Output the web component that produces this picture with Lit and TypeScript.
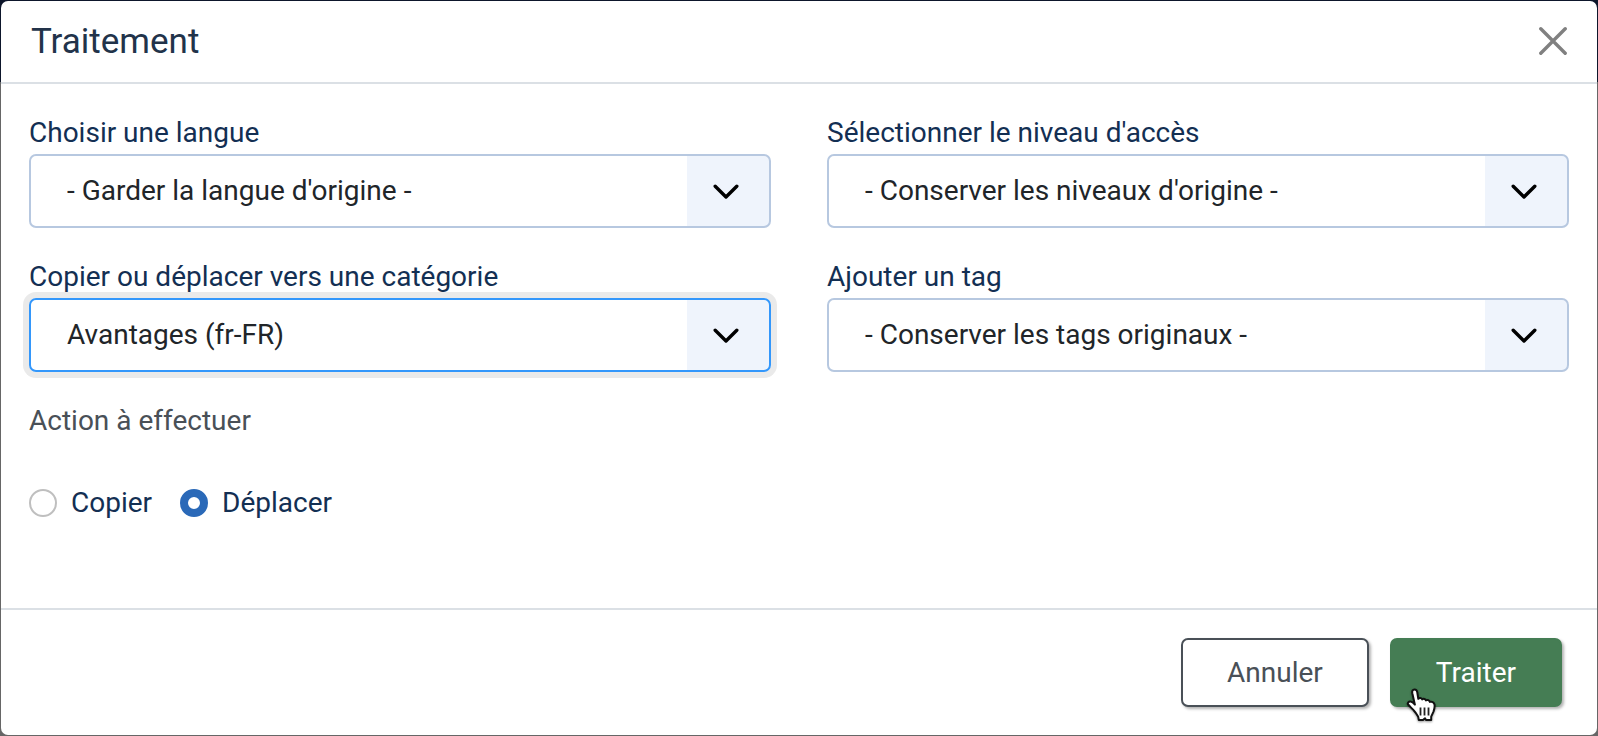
import { LitElement, html, css, svg } from "lit";
import { customElement, property, state } from "lit/decorators.js";
import { classMap } from "lit/directives/class-map.js";

interface Field {
  id: string;
  label: string;
  value: string;
}

const FIELDS: Field[] = [
  { id: "language", label: "Choisir une langue", value: "- Garder la langue d'origine -" },
  { id: "access", label: "Sélectionner le niveau d'accès", value: "- Conserver les niveaux d'origine -" },
  { id: "category", label: "Copier ou déplacer vers une catégorie", value: "Avantages (fr-FR)" },
  { id: "tag", label: "Ajouter un tag", value: "- Conserver les tags originaux -" },
];

@customElement("select-field")
class SelectField extends LitElement {
  @property() name = "";
  @property() label = "";
  @property() value = "";
  @property({ type: Boolean }) active = false;

  static styles = css`
    :host {
      display: block;
    }
    .label {
      display: block;
      line-height: 42px;
      color: #132f53;
    }
    .control {
      display: grid;
      grid-template-columns: 1fr 84px;
      border-radius: 7px;
    }
    .active {
      box-shadow: 0 0 0 6px #eaeaea;
    }
    .select {
      grid-area: 1 / 1 / 2 / 3;
      appearance: none;
      box-sizing: border-box;
      width: 100%;
      height: 74px;
      margin: 0;
      padding: 0 98px 2px 36px;
      border: 2px solid #b7c8e0;
      border-radius: 7px;
      outline: none;
      background: linear-gradient(#eff4fc, #eff4fc) right / 82px 100% no-repeat #fff;
      color: #212529;
      font: inherit;
    }
    .active .select {
      border-color: #3397fb;
    }
    .arrow {
      grid-area: 1 / 2;
      align-self: center;
      justify-self: center;
      z-index: 1;
      pointer-events: none;
      margin-right: 6px;
      margin-top: 2px;
    }
  `;

  render() {
    return html`
      <label class="label" for=${this.name}>${this.label}</label>
      <div class=${classMap({ control: true, active: this.active })}>
        <select class="select" id=${this.name} name=${this.name}>
          <option selected>${this.value}</option>
        </select>
        <svg class="arrow" width="26" height="16" viewBox="0 0 26 16" aria-hidden="true">
          <path d="M2.2 2.2 13 13 23.8 2.2" fill="none" stroke="#000" stroke-width="3.4" stroke-linecap="round" stroke-linejoin="round" />
        </svg>
      </div>
    `;
  }
}

const pointer = svg`
  <path d="M8.500 1.500c1.800 0 2.600 1.200 2.800 3l1 6.300c.9-1.200 3.300-1 3.900.6 1.200-1 3.300-.6 3.800 1 1.400-.9 3.300-.2 3.900 1.500 1.900-.7 4.100.4 4.600 2.600.5 2.500-.2 4.900-1 7.200l-2.300 5v3.300h-5.200l-1-1.700-2 1.700h-4.200l-.6-3.200c-1.200-2.200-2.700-4.600-4.600-6.600-1.500-1.700-4-4-5.500-5.700-1-1.500.6-3.300 2.500-2.900 1.700.3 3.200 1.800 4.300 3L6.300 5.200C5.900 3 6.600 1.500 8.500 1.500Z"
    fill="#fff" stroke="#111" stroke-width="2" stroke-linejoin="round" />
  <path d="M14.500 19.500v8M18.500 19.500v8M22.500 19.500v8" stroke="#222" stroke-width="1.800" fill="none" />
`;

@customElement("app-root")
class AppRoot extends LitElement {
  @state() action = "move";

  static styles = css`
    :host {
      display: flex;
      box-sizing: border-box;
      min-height: 100vh;
      padding: 1px;
      background: linear-gradient(#0d162b 82px, #666 82px);
      font-family: Roboto, "Liberation Sans", sans-serif;
      font-size: 28px;
      color: #212529;
    }
    .dialog {
      flex: 1;
      display: flex;
      flex-direction: column;
      border-radius: 7px;
      background: #fff;
    }
    .header {
      display: flex;
      align-items: center;
      justify-content: space-between;
      height: 81px;
      padding: 0 30px;
      border-bottom: 2px solid #dbe0e5;
    }
    .title {
      margin: 0;
      font-size: 35px;
      font-weight: 400;
      line-height: 42px;
      color: #22334a;
    }
    .close {
      display: flex;
      margin: 0;
      padding: 0 0 2px;
      border: 0;
      background: none;
      color: #808080;
    }
    .body {
      flex: 1;
      padding: 28px;
    }
    .fields {
      display: grid;
      grid-template-columns: 1fr 1fr;
      gap: 28px 56px;
    }
    .actions {
      margin: 28px 0 0;
      padding: 0;
      border: 0;
    }
    .legend {
      padding: 0;
      line-height: 42px;
      color: #495057;
    }
    .options {
      display: flex;
      gap: 28px;
      padding-top: 40px;
    }
    .option {
      display: flex;
      align-items: center;
      gap: 14px;
      line-height: 42px;
      color: #132f53;
    }
    .radio {
      appearance: none;
      box-sizing: border-box;
      width: 28px;
      height: 28px;
      margin: 0;
      border: 2px solid #bfbfbf;
      border-radius: 50%;
      background: #fff;
    }
    .radio:checked {
      border: 8px solid #2a69b8;
    }
    .footer {
      display: flex;
      justify-content: flex-end;
      gap: 21px;
      padding: 28px 35px;
      border-top: 2px solid #dbe0e5;
    }
    .button {
      position: relative;
      box-sizing: border-box;
      height: 69px;
      margin: 0;
      padding: 0 44px;
      border: 2px solid #495057;
      border-radius: 7px;
      background: #fff;
      box-shadow: 2px 2px 3px #0000004d;
      color: #495057;
      font: inherit;
    }
    .primary {
      border-color: #457d54;
      background: #457d54;
      color: #fff;
    }
    .pointer {
      position: absolute;
      left: 14px;
      top: 48px;
      filter: drop-shadow(0 1px 1px #00000066);
    }
  `;

  private option(value: string, label: string) {
    return html`
      <label class="option">
        <input class="radio" type="radio" name="action" .checked=${this.action === value} @change=${() => (this.action = value)} />
        ${label}
      </label>
    `;
  }

  render() {
    return html`
      <form class="dialog" role="dialog" aria-labelledby="title" @submit=${(e: Event) => e.preventDefault()}>
        <header class="header">
          <h3 class="title" id="title">Traitement</h3>
          <button class="close" type="button" aria-label="Fermer">
            <svg width="28" height="28" viewBox="0 0 28 28">
              <path d="M1.800 1.800 26.200 26.200M26.200 1.800 1.800 26.200" fill="none" stroke="currentColor" stroke-width="3.400" stroke-linecap="round" />
            </svg>
          </button>
        </header>
        <div class="body">
          <div class="fields">
            ${FIELDS.map(
              (f) => html`<select-field .name=${f.id} .label=${f.label} .value=${f.value} ?active=${f.id === "category"}></select-field>`
            )}
          </div>
          <fieldset class="actions">
            <legend class="legend">Action à effectuer</legend>
            <div class="options">${this.option("copy", "Copier")} ${this.option("move", "Déplacer")}</div>
          </fieldset>
        </div>
        <footer class="footer">
          <button class="button" type="button">Annuler</button>
          <button class="button primary" type="submit">
            Traiter
            <svg class="pointer" width="32" height="36" viewBox="0 0 32 36" aria-hidden="true">${pointer}</svg>
          </button>
        </footer>
      </form>
    `;
  }
}
